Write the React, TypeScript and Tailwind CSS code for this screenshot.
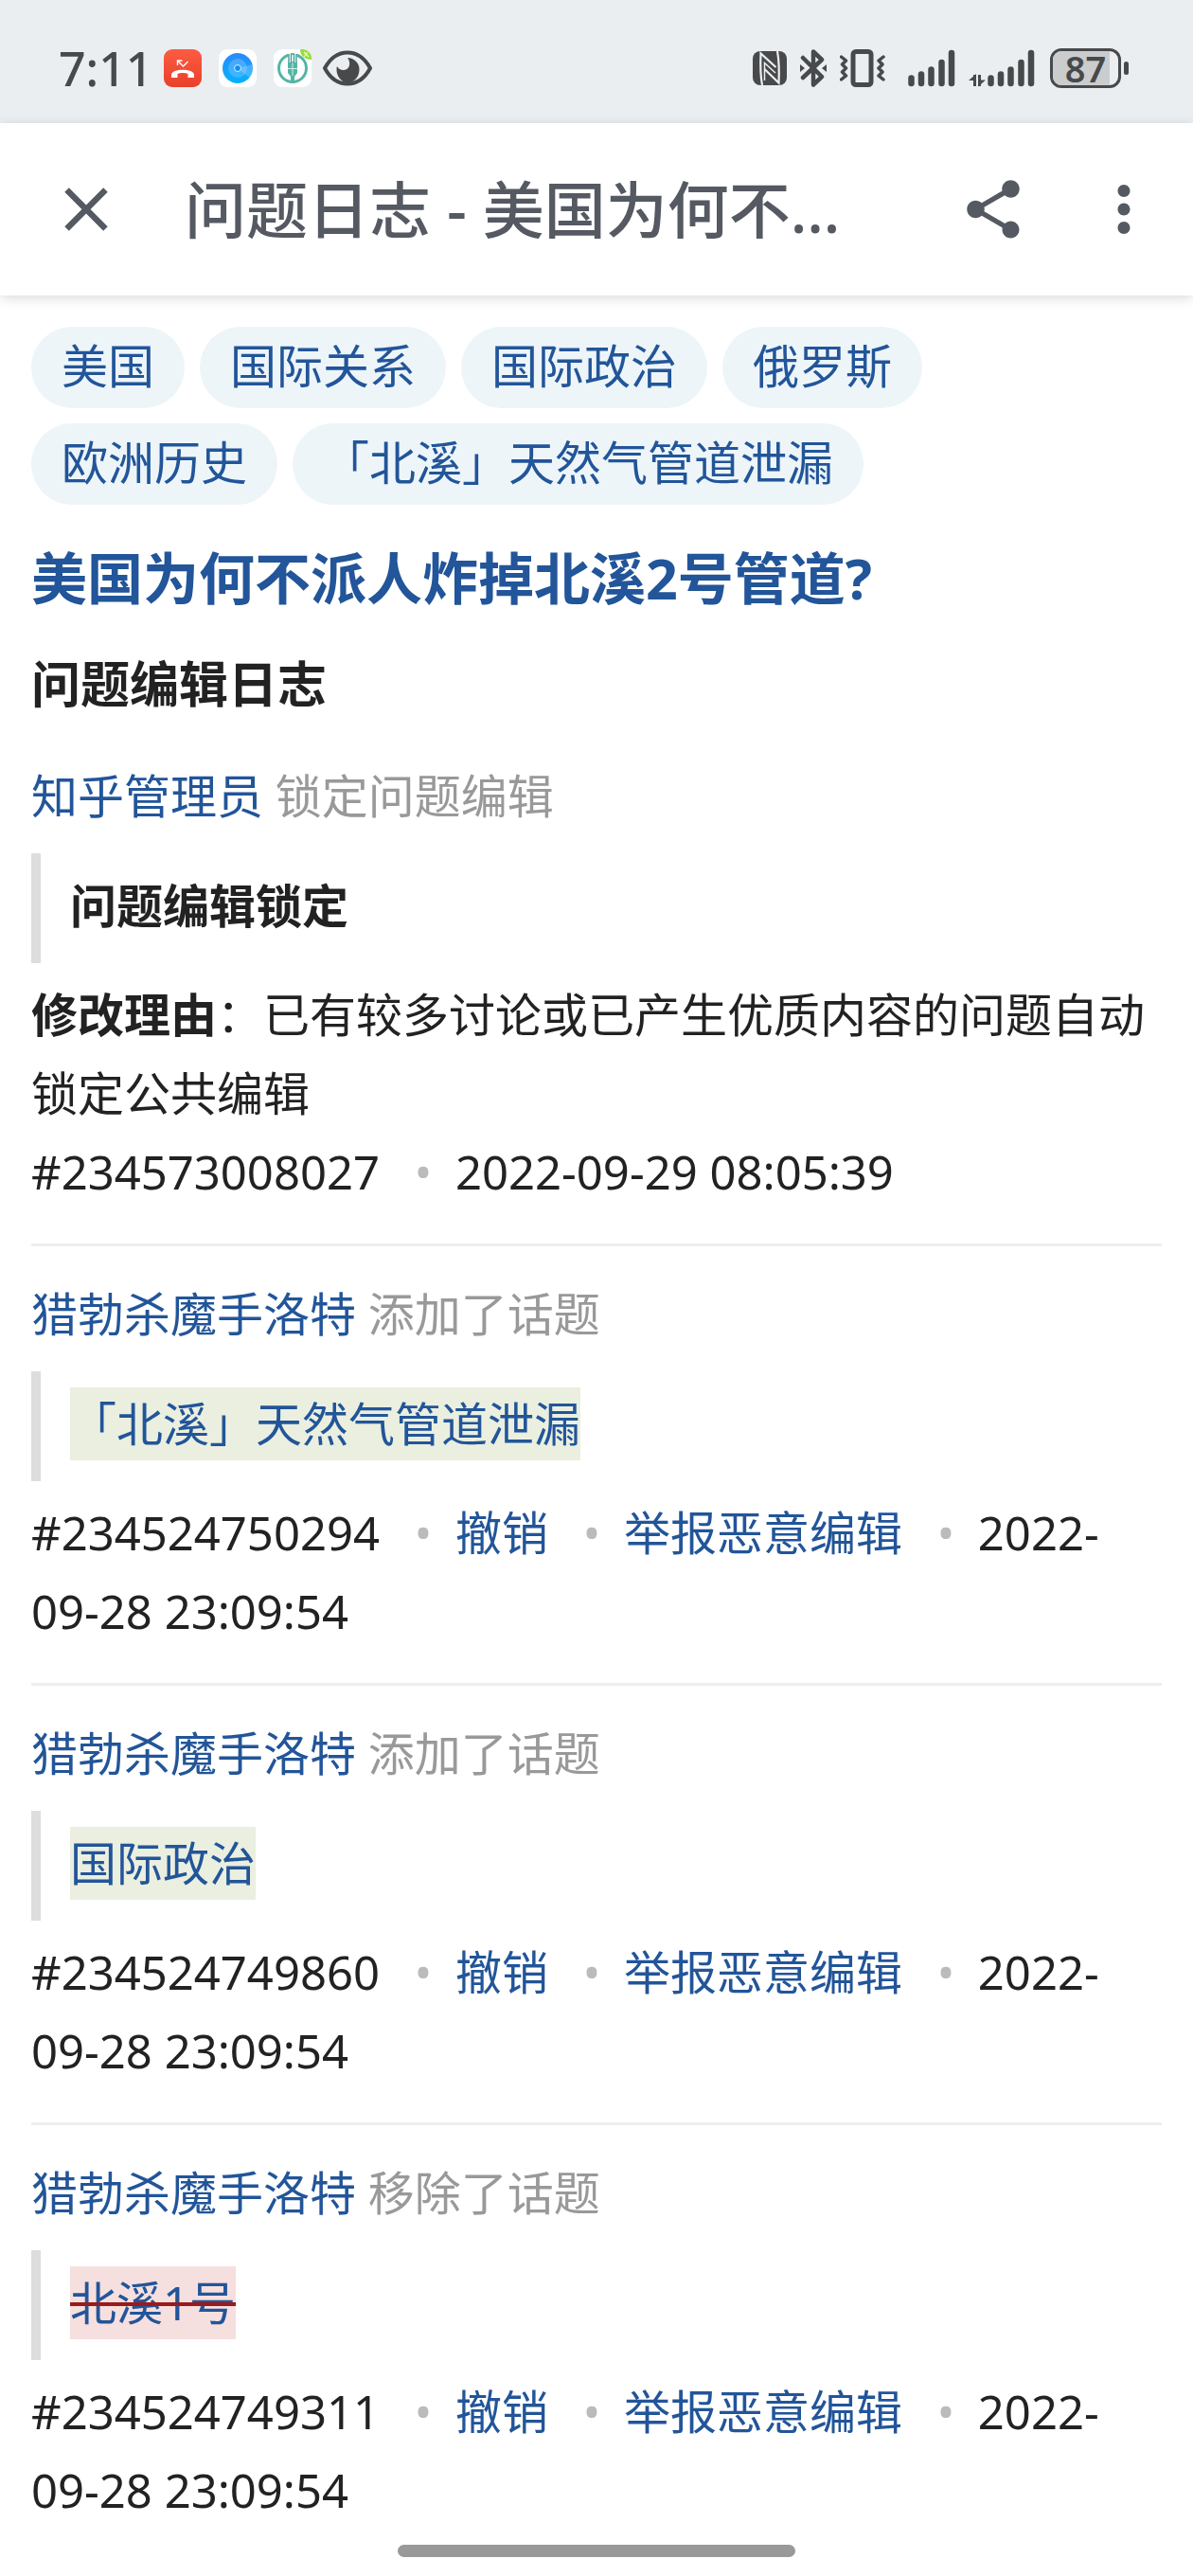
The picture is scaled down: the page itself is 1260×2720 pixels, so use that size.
import type { ReactNode } from "react";
import { MdClose, MdMoreVert, MdShare } from "react-icons/md";

interface LogEntry {
  id: string;
  user: string;
  action: string;
  kind: "lock" | "add" | "remove";
  content: string;
  reason?: string;
  time: string;
}

const topics = ["美国", "国际关系", "国际政治", "俄罗斯", "欧洲历史", "「北溪」天然气管道泄漏"];

const entries: LogEntry[] = [
  {
    id: "234573008027",
    user: "知乎管理员",
    action: "锁定问题编辑",
    kind: "lock",
    content: "问题编辑锁定",
    reason: "已有较多讨论或已产生优质内容的问题自动锁定公共编辑",
    time: "2022-09-29 08:05:39",
  },
  {
    id: "234524750294",
    user: "猎勃杀魔手洛特",
    action: "添加了话题",
    kind: "add",
    content: "「北溪」天然气管道泄漏",
    time: "2022-09-28 23:09:54",
  },
  {
    id: "234524749860",
    user: "猎勃杀魔手洛特",
    action: "添加了话题",
    kind: "add",
    content: "国际政治",
    time: "2022-09-28 23:09:54",
  },
  {
    id: "234524749311",
    user: "猎勃杀魔手洛特",
    action: "移除了话题",
    kind: "remove",
    content: "北溪1号",
    time: "2022-09-28 23:09:54",
  },
];

const MissedCallIcon = () => (
  <svg width="40" height="40" viewBox="0 0 40 40">
    <defs>
      <linearGradient id="call" x1="0" y1="0" x2="0" y2="1">
        <stop offset="0" stopColor="#fd5c42" />
        <stop offset="1" stopColor="#e9402b" />
      </linearGradient>
    </defs>
    <rect width="40" height="40" rx="9" fill="url(#call)" />
    <path d="M14.500 17v-5h5M15 12.500l5.500 5.500 5-5" fill="none" stroke="#fff" strokeWidth="1.400" />
    <path d="M8 30v-3c0-7 24-7 24 0v3h-6.500v-4c-3-1.300-8-1.300-11 0v4z" fill="#fff" />
  </svg>
);

const RadarIcon = () => (
  <svg width="40" height="40" viewBox="0 0 40 40">
    <defs>
      <linearGradient id="radar" x1="0" y1="0" x2="0" y2="1">
        <stop offset="0" stopColor="#2a8afb" />
        <stop offset="1" stopColor="#06b2fd" />
      </linearGradient>
    </defs>
    <rect width="40" height="40" rx="9" fill="#fff" />
    <circle cx="20" cy="20" r="16" fill="url(#radar)" />
    <circle cx="20" cy="20" r="10" fill="#fff" opacity="0.18" />
    <path d="M20 20l12.500 10A16 16 0 0 0 35.500 16z" fill="#fff" opacity="0.2" />
    <circle cx="20" cy="20" r="3.500" fill="#118df5" stroke="#d9f0ff" strokeWidth="1" />
  </svg>
);

const BankIcon = () => (
  <svg width="40" height="40" viewBox="0 0 40 40">
    <rect width="40" height="40" rx="9" fill="#fff" />
    <circle cx="20" cy="20" r="14.500" fill="none" stroke="#55b5a5" strokeWidth="3" />
    <path d="M20 14v22" stroke="#55b5a5" strokeWidth="4" />
    <path d="M15 14h10v11l-3 4h-4l-3-4z" fill="#55b5a5" />
    <path d="M15.500 4h9v10h-9z" fill="#fff" />
    <path d="M16 5v9M24 5v9M18.500 5v9h3v-9z" fill="none" stroke="#429f95" strokeWidth="1.400" />
    <path d="M15 20.500h10M20 14v14" stroke="#d5efe8" strokeWidth="1" />
    <path d="M28 0h3a9 9 0 0 1 9 9v2c-7 0-12-4-12-11z" fill="#9bdc3c" />
    <path d="M32 3l5 5M36 3l-4 5" stroke="#e9fbd0" strokeWidth="1.200" />
  </svg>
);

const EyeIcon = () => (
  <svg width="52" height="40" viewBox="0 0 52 40">
    <path
      d="M2 20C8 9 16 3.500 26 3.500S44 9 50 20C44 31 36 36.500 26 36.500S8 31 2 20z"
      fill="none"
      stroke="#47494b"
      strokeWidth="4"
      strokeLinejoin="round"
    />
    <path d="M26 9c7 .5 12.500 5 12.500 12.500A12 14 0 0 1 14.500 21c0-1 0-2 .5-3 2.500 5 10 5.500 12.500.5 1.500-3.500.5-7-1.500-9.500z" fill="#47494b" />
  </svg>
);

const NfcIcon = () => (
  <svg width="36" height="40" viewBox="0 0 36 40">
    <rect y="2" width="36" height="36" rx="8" fill="#47494b" />
    <path
      d="M10 38C8 27 8 15 8.500 4.500L24.500 19M26 2c2 11 2 23 1.500 33.500L12.500 21"
      fill="none"
      stroke="#eaeef1"
      strokeWidth="2.200"
    />
    <path d="M12.500 33V14.500L24 25" fill="none" stroke="#eaeef1" strokeWidth="1.500" />
  </svg>
);

const BluetoothIcon = () => (
  <svg width="28" height="40" viewBox="0 0 28 40">
    <path
      d="M3 9l20 20-9 8.500V2.500L23 11 3 30"
      fill="none"
      stroke="#47494b"
      strokeWidth="4.500"
      strokeLinejoin="round"
      strokeLinecap="round"
    />
    <path d="M0 16l5 4-5 4zM28 16l-5 4 5 4z" fill="#47494b" />
  </svg>
);

const VibrateIcon = () => (
  <svg width="48" height="40" viewBox="0 0 48 40">
    <g fill="none" stroke="#47494b" strokeLinejoin="round" strokeLinecap="round">
      <rect x="14" y="2.500" width="19" height="35" rx="3" strokeWidth="5" />
      <path d="M1.500 8l5 4-4 4 4 4-4 4 4 4-5 4M46 8l-5 4 4 4-4 4 4 4-4 4 5 4" strokeWidth="3.500" />
    </g>
  </svg>
);

const SignalIcon = () => (
  <svg width="50" height="40" viewBox="0 0 50 40">
    <path
      d="M3.500 30.500v5.500M14 26.500v9.500M24.500 21.500v14.500M35.500 14v22M46 4v32"
      stroke="#47494b"
      strokeWidth="6.500"
      strokeLinecap="round"
    />
  </svg>
);

const DataArrowsIcon = () => (
  <svg width="18" height="40" viewBox="0 0 18 40">
    <path d="M6.500 27v12M11.500 27v12" stroke="#47494b" strokeWidth="3" />
    <path d="M8 26v7H0zM10 39.500v-7h8z" fill="#47494b" />
  </svg>
);

const Battery = ({ level }: { level: number }) => (
  <div className="flex items-center gap-[3px]">
    <div className="relative flex h-[42px] w-[75px] items-center justify-center rounded-[12px] border-[3px] border-[#47494b]">
      <div className="absolute inset-y-0 left-0 rounded-l-[9px] bg-[#cbcccd]" style={{ width: `${level}%` }} />
      <span className="relative text-[38px] font-semibold leading-[36px]">{level}</span>
    </div>
    <div className="h-[14px] w-[5px] rounded-full bg-[#47494b]" />
  </div>
);

const StatusBar = () => (
  <div className="flex h-[130px] items-center justify-between bg-[#eaeef1] pt-[14px] pr-[68px] pl-[62px] text-[#47494b]">
    <div className="flex items-center">
      <span className="mr-3 text-[50px] leading-none font-medium">7:11</span>
      <div className="flex items-center gap-[18px]">
        <MissedCallIcon />
        <RadarIcon />
        <BankIcon />
      </div>
      <div className="ml-3">
        <EyeIcon />
      </div>
    </div>
    <div className="flex items-center gap-[14px]">
      <NfcIcon />
      <BluetoothIcon />
      <VibrateIcon />
      <div className="ml-[10px]">
        <SignalIcon />
      </div>
      <div className="mr-[2px] flex items-center gap-[2px]">
        <DataArrowsIcon />
        <SignalIcon />
      </div>
      <Battery level={87} />
    </div>
  </div>
);

const Header = () => (
  <header className="relative flex h-[182px] items-center bg-white pr-[34px] pl-[52px] text-[#555962] shadow-[0_3px_12px_rgba(0,0,0,0.14)]">
    <button type="button" aria-label="关闭">
      <MdClose size={78} />
    </button>
    <h1 className="ml-[65px] min-w-0 flex-1 truncate text-[65px] leading-[96px] font-medium">
      问题日志 - 美国为何不派人炸掉北溪2号管道?
    </h1>
    <button type="button" aria-label="分享" className="ml-20">
      <MdShare size={74} />
    </button>
    <button type="button" aria-label="更多" className="ml-[62px]">
      <MdMoreVert size={78} />
    </button>
  </header>
);

const TextLink = ({ children }: { children: ReactNode }) => (
  <a href="#" className="text-[#225599]">
    {children}
  </a>
);

const Bullet = () => <span className="mr-3 ml-6 text-[#bbb]">•</span>;

const Content = ({ entry }: { entry: LogEntry }) => {
  if (entry.kind === "lock") {
    return <strong className="font-bold">{entry.content}</strong>;
  }
  if (entry.kind === "add") {
    return (
      <ins className="bg-[#eaefdf] leading-[77px] no-underline">
        <TextLink>{entry.content}</TextLink>
      </ins>
    );
  }
  return (
    <del className="bg-[#f6dfdf] leading-[77px] line-through decoration-[#991b1b] decoration-4">
      <TextLink>{entry.content}</TextLink>
    </del>
  );
};

const LogItem = ({ entry }: { entry: LogEntry }) => (
  <li className="border-b-[3px] border-[#eee] pt-[30px] pb-[34px] first:pt-0 last:border-b-0 last:pb-0">
    <p>
      <TextLink>{entry.user}</TextLink> <span className="text-[#999]">{entry.action}</span>
    </p>
    <blockquote className="mt-[19px] mb-[13px] flex h-[116px] items-center border-l-[10px] border-[#ddd] pb-[6px] pl-[31px]">
      <Content entry={entry} />
    </blockquote>
    {entry.reason && (
      <p>
        <strong className="font-bold">修改理由</strong>：{entry.reason}
      </p>
    )}
    <p>
      #{entry.id} <Bullet />{" "}
      {entry.kind !== "lock" && (
        <>
          <TextLink>撤销</TextLink> <Bullet /> <TextLink>举报恶意编辑</TextLink> <Bullet />{" "}
        </>
      )}
      <time>{entry.time}</time>
    </p>
  </li>
);

export default function App() {
  return (
    <div className="min-h-screen bg-white font-['Noto_Sans','Noto_Sans_CJK_SC',sans-serif] text-[#222]">
      <StatusBar />
      <Header />
      <main className="px-[33px] pt-[33px] text-[49px] leading-[83px]">
        <div className="flex flex-wrap gap-4">
          {topics.map((topic) => (
            <a key={topic} href="#" className="rounded-full bg-[#edf5f9] px-8 pb-1 leading-[82px] text-[#225599]">
              {topic}
            </a>
          ))}
        </div>
        <h2 className="mt-9 text-[59px] font-bold">
          <TextLink>美国为何不派人炸掉北溪2号管道?</TextLink>
        </h2>
        <h3 className="mt-7 text-[52px] font-bold">问题编辑日志</h3>
        <ul className="mt-9">
          {entries.map((entry) => (
            <LogItem key={entry.id} entry={entry} />
          ))}
        </ul>
      </main>
      <div className="mx-auto mt-4 mb-5 h-[13px] w-1/3 rounded-full bg-[#999]" />
    </div>
  );
}
